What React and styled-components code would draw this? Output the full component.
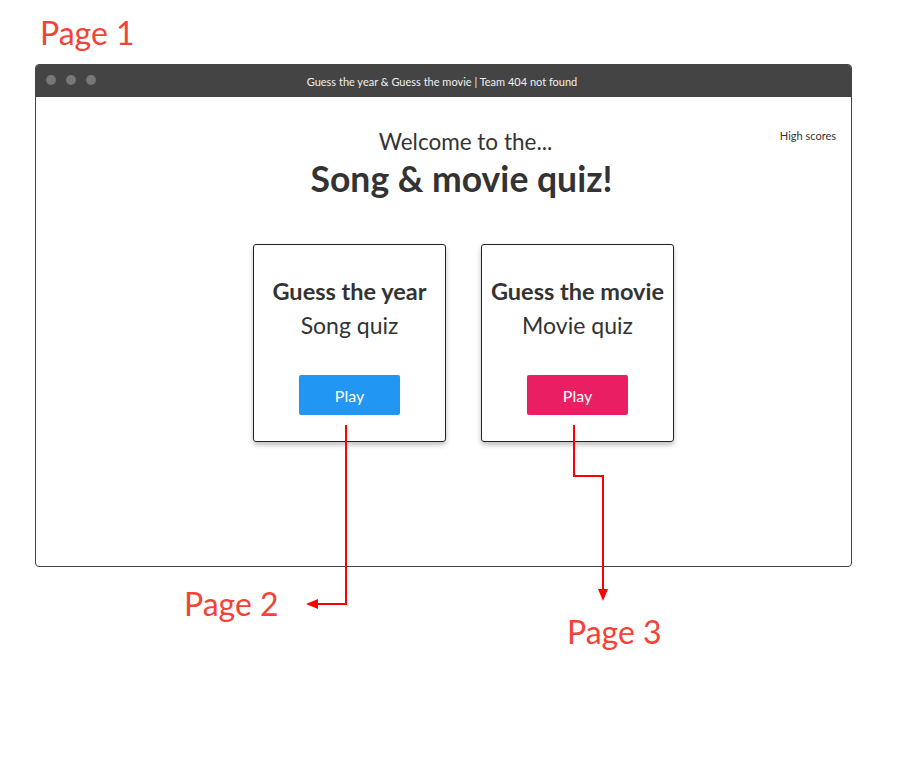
import React from 'react';
import styled, {createGlobalStyle} from 'styled-components';

const GlobalStyle = createGlobalStyle`
    body {
        margin: 0;
        background: #ffffff;
        font-family: "Lato", "Open Sans", sans-serif;
        color: #333333;
    }
`

const quizzes = [
    {title: 'Guess the year', sub: 'Song quiz', color: '#2196f3'},
    {title: 'Guess the movie', sub: 'Movie quiz', color: '#e91e63'},
];

export default function App() {
    return (
        <Canvas>
            <GlobalStyle />
            <PageLabel>Page 1</PageLabel>
            <Window>
                <TitleBar>
                    <Dots>
                        <Dot /><Dot /><Dot />
                    </Dots>
                    <WindowTitle>Guess the year &amp; Guess the movie | Team 404 not found</WindowTitle>
                </TitleBar>
                <Content>
                    <HighScores>High scores</HighScores>
                    <Welcome>Welcome to the...</Welcome>
                    <Headline>Song &amp; movie quiz!</Headline>
                    <Cards>
                        {quizzes.map((q) => (
                            <Card key={q.title}>
                                <CardTitle>{q.title}</CardTitle>
                                <CardSub>{q.sub}</CardSub>
                                <PlayButton color={q.color}>Play</PlayButton>
                            </Card>
                        ))}
                    </Cards>
                </Content>
            </Window>

            <Arrows width="916" height="762" viewBox="0 0 916 762">
                <polyline points="346,425 346,604 316,604" fill="none" stroke="#ff0000" strokeWidth="2" />
                <polygon points="306,604 318,599 318,609" fill="#ff0000" />
                <polyline points="574,425 574,476 603,476 603,590" fill="none" stroke="#ff0000" strokeWidth="2" />
                <polygon points="603,601 598,589 608,589" fill="#ff0000" />
            </Arrows>
            <Annotation left={184} top={585}>Page 2</Annotation>
            <Annotation left={567} top={613}>Page 3</Annotation>
        </Canvas>
    )
}

const Canvas = styled.div`
    position: relative;
    width: 916px;
    height: 762px;
    overflow: hidden;
`

const PageLabel = styled.div`
    color: #f44336;
    font-size: 32px;
    line-height: 38px;
    padding: 14px 0 0 40px;
    height: 50px;
`

const Window = styled.div`
    margin-left: 35px;
    width: 815px;
    height: 501px;
    border: 1px solid #444444;
    border-radius: 4px;
    overflow: hidden;
    display: flex;
    flex-direction: column;
`

const TitleBar = styled.div`
    position: relative;
    height: 32px;
    background: #444444;
    display: flex;
    align-items: center;
    justify-content: center;
`

const Dots = styled.div`
    position: absolute;
    left: 10px;
    top: 10px;
    display: flex;
    gap: 10px;
`

const Dot = styled.span`
    width: 10px;
    height: 10px;
    border-radius: 50%;
    background: #777777;
`

const WindowTitle = styled.div`
    color: #f0f0f0;
    font-size: 11px;
    margin-left: -3px;
`

const Content = styled.div`
    position: relative;
    flex: 1;
    display: flex;
    flex-direction: column;
    align-items: center;
    padding: 31px 0 0 40px;
`

const HighScores = styled.div`
    position: absolute;
    right: 15px;
    top: 32px;
    font-size: 11px;
    color: #333333;
`

const Welcome = styled.div`
    font-size: 22.5px;
    line-height: 28px;
    padding-left: 4px;
`

const Headline = styled.div`
    font-size: 35.5px;
    font-weight: 700;
    line-height: 44px;
    margin-top: 1px;
    margin-right: 4px;
`

const Cards = styled.div`
    display: flex;
    gap: 35px;
    margin-top: 43px;
`

const Card = styled.div`
    width: 193px;
    height: 198px;
    box-sizing: border-box;
    border: 1px solid #222222;
    border-radius: 3px;
    box-shadow: 0 3px 5px rgba(0, 0, 0, 0.25);
    display: flex;
    flex-direction: column;
    align-items: center;
    padding-top: 32px;
`

const CardTitle = styled.div`
    font-size: 23.5px;
    font-weight: 700;
    line-height: 28px;
    white-space: nowrap;
`

const CardSub = styled.div`
    font-size: 23px;
    line-height: 28px;
    margin-top: 6px;
`

const PlayButton = styled.button`
    margin-top: 36px;
    width: 101px;
    height: 40px;
    border: none;
    border-radius: 2px;
    background: ${(p) => p.color};
    color: #ffffff;
    font-family: inherit;
    font-size: 16px;
`

const Arrows = styled.svg`
    position: absolute;
    left: 0;
    top: 0;
    pointer-events: none;
`

const Annotation = styled.div`
    position: absolute;
    left: ${(p) => p.left}px;
    top: ${(p) => p.top}px;
    color: #f44336;
    font-size: 32px;
    line-height: 38px;
`
